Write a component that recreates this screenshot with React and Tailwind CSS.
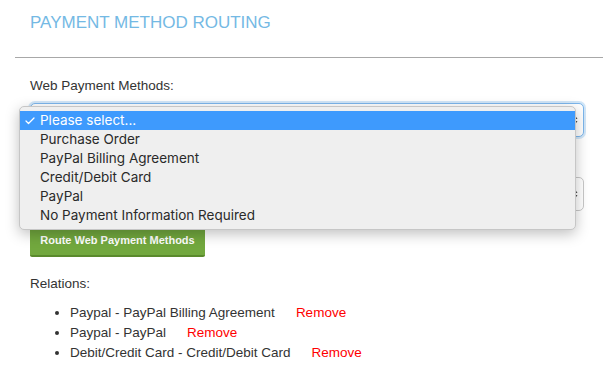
import { Check } from 'lucide-react'

const menuItems = [
  'Please select...',
  'Purchase Order',
  'PayPal Billing Agreement',
  'Credit/Debit Card',
  'PayPal',
  'No Payment Information Required',
]

const relations = [
  'Paypal - PayPal Billing Agreement',
  'Paypal - PayPal',
  'Debit/Credit Card - Credit/Debit Card',
]

function Stepper() {
  return (
    <svg width="8" height="14" viewBox="0 0 8 14" className="text-[#4a4a4a]" aria-hidden>
      <path d="M4 1 L7.5 6 H0.5 Z" fill="currentColor" />
      <path d="M4 13 L7.5 8 H0.5 Z" fill="currentColor" />
    </svg>
  )
}

// closed select; its value is hidden under the open popup
function FakeSelect({ focused }) {
  return (
    <div
      className={
        focused
          ? 'flex h-[34px] items-center justify-end rounded-[5px] border border-[#7cb6ec] bg-white pr-[5px] shadow-[0_0_0_2px_rgba(124,182,236,0.35)]'
          : 'flex h-[34px] items-center justify-end rounded-[5px] border border-[#c8c8c8] bg-white pr-[5px]'
      }
    >
      <Stepper />
    </div>
  )
}

export default function App() {
  return (
    <div className="relative h-[387px] w-[616px] overflow-hidden bg-white font-['Liberation_Sans',Arial,sans-serif] text-[#333]">
      <div className="ml-[15px] mr-[13px] flex h-[58px] items-start border-b border-[#a8a8a8] pl-[15px] pt-[12px]">
        <h1 className="text-[17px] leading-[22px] text-[#74b9e4]">PAYMENT METHOD ROUTING</h1>
      </div>

      <div className="pl-[30px] pr-[32px]">
        <div className="mt-[18px] text-[13.5px] leading-[20px]">Web Payment Methods:</div>
        <div className="mt-[7px]">
          <FakeSelect focused />
        </div>

        {/* label row covered by the popup */}
        <div className="mt-[13px] h-[20px]" />
        <div className="mt-[7px]">
          <FakeSelect />
        </div>

        <button
          type="button"
          className="mt-[15px] h-[31px] w-[175px] rounded-[2px] border-b-2 border-[#5a8a2c] bg-[#72a83e] text-[11px] font-bold text-white"
        >
          Route Web Payment Methods
        </button>

        <div className="mt-[17px] text-[13.5px] leading-[20px]">Relations:</div>
        <ul className="mt-[9px] list-disc pl-[40px] text-[13.5px] leading-[20px]">
          {relations.map((r) => (
            <li key={r}>
              {r}
              <span className="ml-[21px] text-[#ff0000]">Remove</span>
            </li>
          ))}
        </ul>
      </div>

      {/* native select popup */}
      <div className="absolute left-[19px] top-[106px] w-[557px] rounded-[5px] border border-[#c6c6c6] bg-[#efefef] py-[4px] font-['Inter',sans-serif] text-[13.5px] text-[#2a2a2a] shadow-[0_4px_14px_rgba(0,0,0,0.25)]">
        {menuItems.map((item, i) => (
          <div
            key={item}
            className={
              i === 0
                ? 'flex h-[19px] items-center bg-[#3e9afd] text-white'
                : 'flex h-[19px] items-center'
            }
          >
            <span className="flex w-[20px] justify-end pr-[4px]">
              {i === 0 && <Check size={12} strokeWidth={2.5} />}
            </span>
            <span>{item}</span>
          </div>
        ))}
      </div>
    </div>
  )
}
